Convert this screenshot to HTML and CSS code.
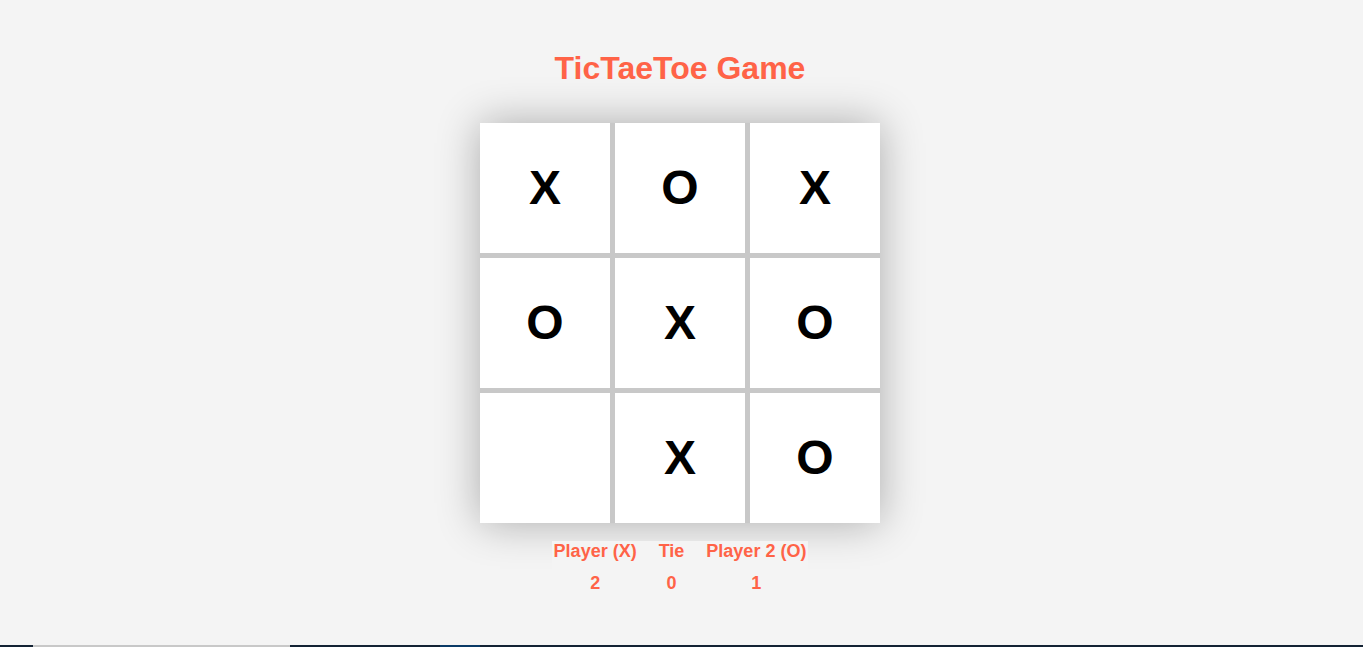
FILE: index.html
```html
<!DOCTYPE html>
<html lang="en">
<head>
<meta charset="utf-8">
<title>TicTaeToe Game</title>
<link rel="stylesheet" href="styles.css">
</head>
<body>
<main class="app">
  <h1 class="title">TicTaeToe Game</h1>
  <div class="board">
    <div class="cell">X</div>
    <div class="cell">O</div>
    <div class="cell">X</div>
    <div class="cell">O</div>
    <div class="cell">X</div>
    <div class="cell">O</div>
    <div class="cell"></div>
    <div class="cell">X</div>
    <div class="cell">O</div>
  </div>
  <table class="score">
    <tr><th>Player (X)</th><th>Tie</th><th>Player 2 (O)</th></tr>
    <tr><td>2</td><td>0</td><td>1</td></tr>
  </table>
</main>
<div class="taskbar"><span class="tb-light"></span><span class="tb-blue"></span></div>
</body>
</html>
```
FILE: styles.css
```css
html, body {
  margin: 0;
  padding: 0;
  height: 100%;
}
body {
  background: #f4f4f4;
  font-family: "Liberation Sans", Arial, sans-serif;
  position: relative;
  overflow: hidden;
}
.app {
  display: flex;
  flex-direction: column;
  align-items: center;
  padding-right: 3px;
}
.title {
  margin: 50px 0 0;
  font-size: 32px;
  line-height: 37px;
  font-weight: bold;
  color: #ff6347;
}
.board {
  margin-top: 36px;
  display: grid;
  grid-template-columns: repeat(3, 130px);
  grid-template-rows: repeat(3, 130px);
  gap: 5px;
  background: #c8c8c8;
  box-shadow: 0 0 40px rgba(0, 0, 0, 0.3);
}
.cell {
  background: #fff;
  display: flex;
  align-items: center;
  justify-content: center;
  font-size: 48px;
  font-weight: bold;
  color: #000;
  padding-bottom: 2px;
}
.score {
  margin-top: 18px;
  border-collapse: collapse;
  background: #f4f4f4;
  color: #ff6347;
  font-size: 18px;
  font-weight: bold;
  position: relative;
}
.score th, .score td {
  padding: 0 11px;
  text-align: center;
  line-height: 21px;
}
.score td {
  padding-top: 11px;
}
.score th:first-child, .score td:first-child { padding-left: 2px; }
.score th:last-child, .score td:last-child { padding-right: 2px; }
.taskbar {
  position: absolute;
  left: 0;
  right: 0;
  bottom: 0;
  height: 2px;
  background: #132233;
}
.tb-light {
  position: absolute;
  left: 33px;
  width: 257px;
  top: 0;
  bottom: 0;
  background: #c8c8c8;
}
.tb-blue {
  position: absolute;
  left: 440px;
  width: 40px;
  top: 0;
  bottom: 0;
  background: #0a3a66;
}
```
